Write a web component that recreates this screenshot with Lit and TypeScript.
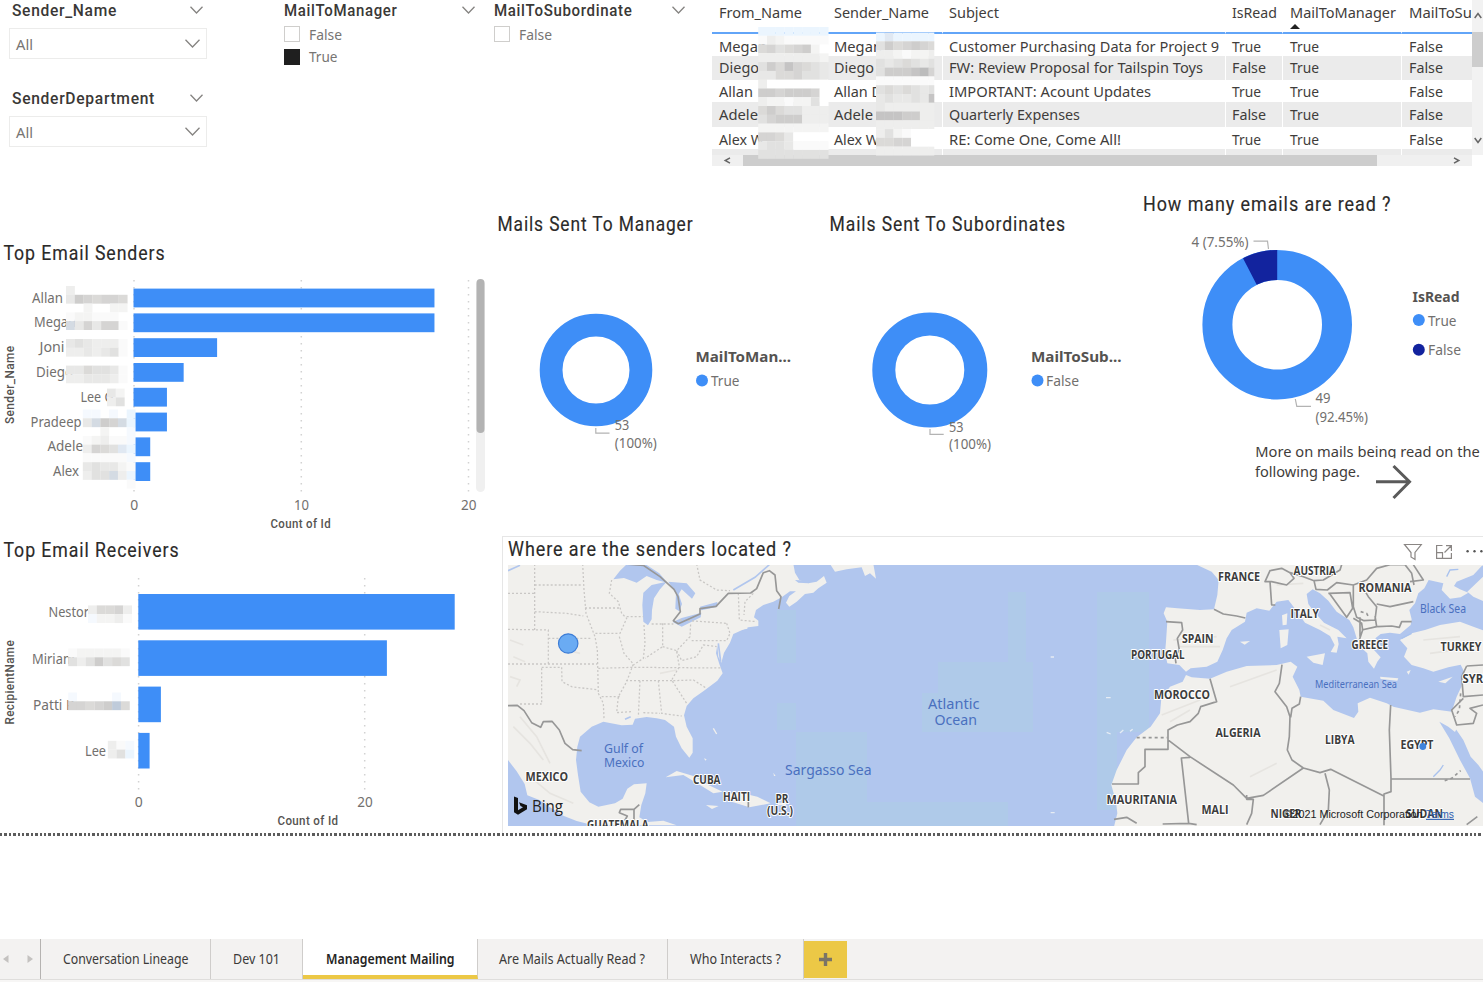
import { LitElement, html, svg, css } from "lit";
import { customElement } from "lit/decorators.js";

const BLUE = "#3e8ef7";
const NAVY = "#12239e";

/* Text set to a fixed measure inside any SVG. */
const tx = (s: string, x: number, y: number, w: number, cls: string) =>
  svg`<text class=${cls} x=${x} y=${y} textLength=${w} lengthAdjust="spacingAndGlyphs">${s}</text>`;

/* Inline label of a known width, placed by the surrounding flow. */
const label = (s: string, w: number, cls: string) =>
  html`<svg class="lbl" width=${w} height="20">${tx(s, 0, 15, w, cls)}</svg>`;

const chevron = (w: number, h: number) => html`
  <svg class="chev" width=${w} height=${h} viewBox="0 0 ${w} ${h}">
    <path d="M.5 .8L${w / 2} ${h - 1}L${w - 0.5} .8" fill="none" stroke="#858381" stroke-width="1.3" />
  </svg>`;

const TONES: Record<string, string> = {
  "0": "#ffffff", "1": "#fafafa", "2": "#f4f4f3", "3": "#eeeeed", "4": "#e8e8e7", "5": "#e1e1e0",
  "6": "#dbdad8", "7": "#d5d4d3", "8": "#cecdcc", "9": "#c5c4c4", A: "#bcbcbc",
  b: "#ebf5fe", p: "#f5f9fe", s: "#d4dbe3", S: "#bfcbda", c: "#e0e8f2",
};
const CELL = 8.78;
/* Redaction mosaic: one character per cell, "." leaves the cell open. */
const mosaic = (x: number, y: number, rows: string[], maxW = 999) =>
  rows.flatMap((r, j) =>
    [...r].map((c, i) =>
      c === "."
        ? null
        : svg`<rect x=${x + i * CELL} y=${y + j * CELL} width=${Math.min(CELL + 0.1, maxW - i * CELL)} height=${CELL + 0.1} fill=${TONES[c]} />`
    )
  );

const shared = css`
  :host { display: block; font-family: "Noto Sans", "Open Sans", sans-serif; color: #252423; }
  * { box-sizing: border-box; }
  svg { display: block; overflow: visible; flex: none; }
  .title { font: 400 19.5px Roboto, sans-serif; letter-spacing: 1px; fill: #2b2a29; stroke: #2b2a29; stroke-width: 0.15px; }
  .head { font: 500 16px Roboto, sans-serif; letter-spacing: 0.7px; fill: #3a3836; }
  .axis { font: 500 12.5px Roboto, sans-serif; letter-spacing: 0.4px; fill: #555351; }
  .tick { font: 13.5px "Noto Sans", sans-serif; fill: #72706e; }
  .cell { font: 14px "Noto Sans", sans-serif; fill: #3f3d3b; }
  .soft { font: 14.2px "Noto Sans", sans-serif; fill: #777573; }
  .strong { font: 700 13.5px "Noto Sans", sans-serif; fill: #555351; }
`;

@customElement("slicer-dropdown")
class SlicerDropdown extends LitElement {
  static properties = { name: {}, w: { type: Number } };
  name = "";
  w = 100;
  static styles = [shared, css`
    .top { display: flex; align-items: center; justify-content: space-between; height: 20px; padding: 0 3px 0 3px; width: 197px; }
    .top .chev { margin-top: -2px; }
    .box { margin: 7px 0 0 0; width: 198px; height: 31px; border: 1.5px solid #ececeb; display: flex; align-items: center; justify-content: space-between; padding: 3px 6px 0 6px; }
    .box .chev { margin-top: -3px; }
  `];
  render() {
    return html`
      <div class="top">${label(this.name, this.w, "head")}${chevron(13, 8)}</div>
      <div class="box">${label("All", 17, "soft")}${chevron(15, 9)}</div>`;
  }
}

@customElement("slicer-list")
class SlicerList extends LitElement {
  static properties = { name: {}, w: { type: Number }, items: { attribute: false } };
  name = "";
  w = 100;
  items: [string, number, boolean][] = [];
  static styles = [shared, css`
    .top { display: flex; align-items: center; justify-content: space-between; height: 20px; width: 191px; margin-bottom: 2px; }
    .top .chev { margin-top: -2px; }
    .item { display: flex; align-items: center; height: 22.5px; gap: 9px; }
    .check { width: 16px; height: 16px; border: 1.3px solid #cfcecc; background: #fff; }
    .on { background: #1f1f1f; border-color: #1f1f1f; }
    .item svg { margin-top: 1px; }
  `];
  render() {
    return html`
      <div class="top">${label(this.name, this.w, "head")}${chevron(13, 8)}</div>
      ${this.items.map(([t, w, on]) => html`
        <div class="item"><span class="check ${on ? "on" : ""}"></span>${label(t, w, "soft")}</div>`)}`;
  }
}

type Cell = [string, number];
const HEADERS: Cell[] = [["From_Name", 83], ["Sender_Name", 95], ["Subject", 50], ["IsRead", 45], ["MailToManager", 106], ["MailToSubordinate", 131]];
const T: Cell = ["True", 29];
const F: Cell = ["False", 34];
const ROWS: Cell[][] = [
  [["Megan", 48], ["Megan", 48], ["Customer Purchasing Data for Project 9", 270], T, T, F],
  [["Diego", 40], ["Diego", 40], ["FW: Review Proposal for Tailspin Toys", 254], F, T, F],
  [["Allan", 34], ["Allan D", 48], ["IMPORTANT: Acount Updates", 202], T, T, F],
  [["Adele", 39], ["Adele", 39], ["Quarterly Expenses", 131], F, T, F],
  [["Alex W", 45], ["Alex W", 45], ["RE: Come One, Come All!", 172], T, T, F],
];

@customElement("mail-table")
class MailTable extends LitElement {
  static styles = [shared, css`
    .wrap { position: relative; display: grid; grid-template-columns: 760px 11px; grid-template-rows: 155px 11px; width: 771px; overflow: hidden; }
    .grid { overflow: hidden; height: 155px; }
    .row { display: grid; grid-template-columns: 115.5px 115px 283px 57.5px 119px 200px; height: 22.5px; }
    .row > div { padding: 1px 0 0 6.5px; display: flex; align-items: center; border-right: 1px solid #fff; }
    .row.hdr { height: 34px; }
    .row.hdr > div { border-bottom: 2px solid #62a5f8; align-items: flex-start; padding-top: 3px; flex-direction: column; }
    .tri { width: 0; border: 5px solid transparent; border-top: 0; border-bottom: 5px solid #222; margin-top: 1px; }
    .row.r0 { height: 21.5px; }
    .row.r0 > div { padding-top: 3px; }
    .row.odd { height: 24.3px; background: #ebebeb; }
    .row.r4 > div { padding-top: 3px; }
    .row.rest { background: #ebebeb; height: 8px; }
    .vbar { background: #f2f2f2; display: flex; flex-direction: column; align-items: center; }
    .vbar .thumb { width: 11px; height: 35px; background: #cdcdcd; }
    .up { height: 32px; padding-top: 12px; }
    .down { margin-top: auto; padding-bottom: 11px; }
    .hbar { background: #f0f0f0; display: flex; align-items: center; width: 760px; }
    .hbar .thumb { width: 634px; height: 11px; background: #cdcdcd; margin-left: 13px; }
    .hbar .l { margin-left: 12px; }
    .hbar .r { margin-left: auto; margin-right: 12px; }
    .veil { position: absolute; left: 0; top: 0; }
  `];
  render() {
    const arrow = (d: string, w: number, h: number, c: string) =>
      html`<div class=${c}><svg width=${w} height=${h} viewBox="0 0 ${w} ${h}"><path d=${d} fill="none" stroke="#666" stroke-width="1.5" /></svg></div>`;
    return html`
      <div class="wrap">
        <div class="grid">
          <div class="row hdr">${HEADERS.map(([t, w], i) => html`<div>${label(t, w, "cell")}${i === 4 ? html`<span class="tri"></span>` : null}</div>`)}</div>
          ${ROWS.map((r, i) => html`<div class="row ${i % 2 ? "odd" : ""} r${i}">${r.map(([t, w]) => html`<div>${label(t, w, "cell")}</div>`)}</div>`)}
          <div class="row rest">${HEADERS.map(() => html`<div></div>`)}</div>
        </div>
        <div class="vbar">
          ${arrow("M.7 6L4 1.5L7.3 6", 8, 7, "up")}
          <div class="thumb"></div>
          ${arrow("M.7 1L4 5.5L7.3 1", 8, 7, "down")}
        </div>
        <div class="hbar">
          ${arrow("M6 .8L1.2 3.5L6 6.2", 6, 7, "l")}
          <div class="thumb"></div>
          ${arrow("M0 .8L4.8 3.5L0 6.2", 6, 7, "r")}
        </div>
        <svg class="veil" width="771" height="166" viewBox="712 0 771 166">
          ${mosaic(758.2, 27, ["bbbbbbbb", "13211111", "67567820", "33333332", "58697654", "44667554", "30000000", "88788870", "32212250", "68655333", "57888333", "22222222", "77640000", "45541111", "55555555"])}
          ${mosaic(876, 32.5, ["bcbbbbb", "5867876", "3321223", "5456545", "58889A7", "1111111", "5656545", "4544549", "4333333", "9998833", "3333333", "3521000", "6677000", "3333333"], 58.3)}
        </svg>
      </div>`;
  }
}

@customElement("bar-senders")
class BarSenders extends LitElement {
  static styles = shared;
  bars: [string, number, number, number][] = [
    ["Allan", 32, 31, 18], ["Megan", 34, 42, 18], ["Joni", 39.5, 25, 5], ["Diego", 36, 37, 3],
    ["Lee G", 80.5, 33, 2], ["Pradeep", 30.5, 51, 2], ["Adele", 47.5, 35.5, 1], ["Alex", 53, 26, 1],
  ];
  render() {
    return html`<svg width="500" height="300" viewBox="0 236 500 300">
      ${tx("Top Email Senders", 3.5, 260, 162, "title")}
      ${[134, 301.3, 468.5].map((x) => svg`<line x1=${x} x2=${x} y1="280" y2="493" stroke="#d2d2d2" stroke-dasharray="1.6 5.4" stroke-width="1.5" />`)}
      ${this.bars.map(([n, x, w, v], i) => svg`
        ${tx(n, x, 302.6 + i * 24.8, w, "tick")}
        <rect x="133.5" y=${288.6 + i * 24.8} width=${v * 16.72} height="18.8" fill=${BLUE} />`)}
      ${mosaic(66, 286, ["3......", "4876776", "..2..22", "1221110", "s474771"])}
      ${mosaic(66, 339, ["4543331", "3343451"])}
      ${mosaic(66, 365.6, ["4465541", "3344431"])}
      ${mosaic(107, 388.6, ["42", "35"])}
      ${mosaic(82.8, 409.5, ["pp.p.b", "4s87sb", "..2..p", "12311p", "3765cb", "11111p", "454421", "355s3b", ".....1"])}
      <rect x="476" y="280" width="9" height="212" rx="4.5" fill="#f0f0f0" />
      <rect x="476.5" y="279" width="8" height="154" rx="4" fill="#b3b3b3" />
      ${tx("0", 130.3, 509.5, 8, "tick")}${tx("10", 294, 509.5, 15, "tick")}${tx("20", 461, 509.5, 15.5, "tick")}
      ${tx("Count of Id", 270.5, 528, 60.5, "axis")}
      <g transform="rotate(-90 13.5 424)">${tx("Sender_Name", 13.5, 424, 78.5, "axis")}</g>
    </svg>`;
  }
}

@customElement("bar-receivers")
class BarReceivers extends LitElement {
  static styles = shared;
  bars: [string, number, number, number][] = [
    ["Nestor", 48.5, 40.5, 28], ["Miriam", 32, 43, 22], ["Patti R", 33, 41.5, 2], ["Lee", 85, 21, 1],
  ];
  render() {
    return html`<svg width="500" height="297" viewBox="0 536 500 297">
      ${tx("Top Email Receivers", 3.5, 557, 176, "title")}
      ${[138.6, 364.7].map((x) => svg`<line x1=${x} x2=${x} y1="578" y2="790" stroke="#d2d2d2" stroke-dasharray="1.6 5.4" stroke-width="1.5" />`)}
      ${this.bars.map(([n, x, w, v], i) => svg`
        ${tx(n, x, 617.3 + i * 46.3, w, "tick")}
        <rect x="138.3" y=${594 + i * 46.3} width=${v * 11.3} height="35.6" fill=${BLUE} />`)}
      ${mosaic(88, 605.4, ["36673", "p2231"])}
      ${mosaic(68.2, 648.5, ["1222221", "5358565"])}
      ${mosaic(68.2, 692.5, ["p....p.", "77678S6"])}
      ${mosaic(107.8, 740.8, ["31p", "35b"])}
      ${tx("0", 134.8, 806.5, 8, "tick")}${tx("20", 357.3, 806.5, 15.5, "tick")}
      ${tx("Count of Id", 277.5, 825, 61, "axis")}
      <g transform="rotate(-90 13.5 724.5)">${tx("RecipientName", 13.5, 724.5, 84.5, "axis")}</g>
    </svg>`;
  }
}

const ring = (cx: number, cy: number, ro: number, ri: number) =>
  svg`<circle cx=${cx} cy=${cy} r=${(ro + ri) / 2} fill="none" stroke=${BLUE} stroke-width=${ro - ri} />`;
const slice = (cx: number, cy: number, ro: number, ri: number, deg: number) => {
  const a = (deg * Math.PI) / 180;
  const s = Math.sin(a), c = Math.cos(a);
  return svg`<path fill=${NAVY} d="M${cx} ${cy - ro}A${ro} ${ro} 0 0 0 ${cx - ro * s} ${cy - ro * c}L${cx - ri * s} ${cy - ri * c}A${ri} ${ri} 0 0 1 ${cx} ${cy - ri}Z" />`;
};
const lead = (d: string) => svg`<path d=${d} fill="none" stroke="#b3b3b3" stroke-width="1.2" />`;

@customElement("donut-row")
class DonutRow extends LitElement {
  static styles = [shared, css`.row { display: flex; }`];
  render() {
    return html`<div class="row">
      <svg width="328" height="346" viewBox="497 190 328 346">
        ${tx("Mails Sent To Manager", 497.5, 230.5, 196, "title")}
        ${ring(596, 370, 56.3, 33.5)}
        ${lead("M595.8 428V433.2H609.5")}
        ${tx("53", 614.8, 429.5, 14.5, "tick")}${tx("(100%)", 614.8, 448, 42, "tick")}
        ${tx("MailToMan...", 695.5, 362, 95.5, "strong")}
        <circle cx="702" cy="380.6" r="6" fill=${BLUE} />${tx("True", 711, 386, 28.5, "tick")}
      </svg>
      <svg width="315" height="346" viewBox="825 190 315 346">
        ${tx("Mails Sent To Subordinates", 829.5, 230.5, 236.5, "title")}
        ${ring(929.8, 370, 57.5, 34.5)}
        ${lead("M930 429V434.4H943.7")}
        ${tx("53", 949, 431.5, 14.5, "tick")}${tx("(100%)", 949, 449, 42, "tick")}
        ${tx("MailToSub...", 1031, 362, 90.5, "strong")}
        <circle cx="1037.5" cy="380.6" r="6" fill=${BLUE} />${tx("False", 1046, 386, 33, "tick")}
      </svg>
      <svg width="343" height="346" viewBox="1140 190 343 346">
        ${tx("How many emails are read ?", 1143, 210.5, 248.5, "title")}
        ${ring(1277.2, 324.7, 74.8, 44.8)}
        ${slice(1277.2, 324.7, 74.8, 44.8, 27.2)}
        ${lead("M1253.5 241.2H1267.5L1268.5 249")}${lead("M1295.3 399L1296.8 406.4H1311")}
        ${tx("4 (7.55%)", 1191.5, 246.8, 57, "tick")}
        ${tx("49", 1315.5, 403, 15, "tick")}${tx("(92.45%)", 1315.5, 421.8, 52.5, "tick")}
        ${tx("IsRead", 1412.5, 301.5, 47, "strong")}
        <circle cx="1418.8" cy="320" r="6" fill=${BLUE} />${tx("True", 1428, 325.6, 28.5, "tick")}
        <circle cx="1418.8" cy="349.7" r="6" fill=${NAVY} />${tx("False", 1428, 354.6, 33, "tick")}
        ${tx("More on mails being read on the", 1255.3, 457, 224.5, "cell")}
        ${tx("following page.", 1255, 476.7, 105, "cell")}
        <rect x="1374" y="458.3" width="38" height="8" fill="#fff" />
        <path d="M1376 481.7H1409M1393.5 466L1409.5 481.7L1393.5 498" fill="none" stroke="#5a5a5a" stroke-width="3" />
      </svg>
    </div>`;
  }
}

/* Coastlines and borders; each side of the ocean has its own 1/3-pixel grid. */
const AMERICA = "M24 102H880L885 128L898 150L925 160L950 155L972 138L980 158L955 175L940 188L915 192L890 215L868 230L858 218L868 198L888 184L870 184L845 202L820 215L790 225L768 240L762 262L775 272V288L745 292L700 312L690 338L672 368L664 398L655 380L652 345L648 370L658 402L668 430L652 452L612 482L580 505L560 528L552 556L560 590L578 625V668L568 683L545 655L528 620L522 590L495 570L470 565L440 561L405 566L398 584L365 586L310 575L275 590L240 620L232 650L228 690L234 735L242 785L268 817L295 830L345 820L368 806L382 776L402 763L440 760L436 790L424 825L418 862L442 876L490 872L530 886H280L230 873L190 857L150 832L118 810L82 796L74 762L50 724L24 690Z";
const LAKES = ["M340 148L360 122L378 105L440 105L478 130L502 158L470 150L440 138L410 158L372 144Z", "M430 188L455 165L500 155L480 178L462 205L456 240L455 268L444 286L430 275L427 225Z", "M505 155L560 160L586 190L576 206L545 178L536 192L546 222L538 244L526 236L528 190Z", "M518 276L545 264L604 248L602 262L545 290Z", "M600 230L652 216L652 230L604 241Z"];
const STATES = "M104 102V300M24 190H104M104 165H245M104 245L200 250L250 258M248 102L252 180L258 250L285 320L292 360L295 490M24 298L145 300V402M145 325H275M24 402H292M125 415V522M125 412H185L186 455L215 470L295 480M60 522H125M255 234H362M335 150L328 190L355 215L365 250L380 265L360 310H280M380 260H430M358 320L372 370L400 402L380 455L355 500L350 548L395 545M295 415L400 412L665 414M378 452H520M295 490L310 520L312 565M305 500H360M432 285L435 340L430 385L400 405M488 280V350L435 385M488 350L530 362L570 320L572 280M455 282H520M540 270L680 280M575 332H680L690 310M530 362L545 392L590 380L610 345L650 350M530 365L538 410L515 450L560 520M420 452L415 560M475 452L485 550L545 558M430 548L480 550M520 452L580 450L620 475M590 102L600 150L650 180L690 182M715 190L718 270L770 275M760 190L735 215L732 255M680 280L690 310";
const BORDER_A = ["M375 102L430 106L480 140L522 178L534 200L541 245L520 272L535 281L600 252L600 236L648 229L685 190L752 189L770 176L790 128L808 122L825 135L830 182L843 200L836 237", "M24 527L52 526L72 542L95 578L122 592L130 575L156 574L178 600L195 640L218 659L245 662", "M418 824L402 838L362 838L358 848L382 858L374 872M402 838V872"];
const EUROPE = "M315 102L365 125L386 150L382 195L372 238L330 240L262 235L228 232L221 250L232 275L228 335L225 368L232 400L268 405L288 425L302 415L350 410L382 395L398 360L410 325L425 300L465 275L470 248L500 235L538 242L560 215L595 210L618 240L645 278L690 300L720 318L734 345L722 366L740 368L746 342L742 320L770 325L745 300L702 278L672 245L655 222L650 192L668 178L690 190L715 212L740 245L778 270L790 292L800 325L808 348L832 370L835 395L852 416L862 395L872 382L852 360L875 352L856 325L872 312L900 308L930 312L962 285L965 268L958 240L975 220L985 190L1003 175L1016 150L1060 160L1055 180L1080 206L1112 202L1135 188L1110 178L1092 168L1100 155L1150 135L1175 108L1190 102ZM930 330L965 310L1005 300L1050 285L1110 275L1150 290L1190 305V740L1165 705L1142 680L1120 630L1098 598L1085 545L1100 500L1114 470L1120 420L1112 404L1075 412L1030 425L1000 415L965 405L942 380L952 355ZM1132 185L1190 130V218L1150 200Z";
const AFRICA = "M288 435L305 442L360 446L410 425L470 408L560 405L602 395L622 410L608 440L628 480L632 500L700 512L730 540L792 564L805 545L803 520L840 503L890 520L910 530L990 548L1030 538L1086 545L1108 580L1095 606L1075 590L1048 575L1078 625L1110 690L1140 745L1155 800L1190 828V890H72L82 850L78 815L64 765L80 720L110 660L140 622L182 590L210 550L214 505L240 470L278 455Z";
const ISLES = ["M650 380L705 370L698 405L670 398Z", "M568 300L596 298L592 345L572 355Z", "M576 256L592 250L590 284L578 286Z", "M870 440L925 445L922 452L872 447Z", "M1045 455L1088 440L1066 460Z", "M450 335L480 333L464 344Z", "M950 425L962 420L956 434Z"];
const BORDER_E = ["M372 238L400 252L440 258L466 264M228 275L275 278L278 300L262 325L268 360L255 380L258 400M360 446L380 515L332 530L325 550L300 575L262 585L234 600V658H165V710L145 728V762H66M232 628L300 680L430 765L470 805L520 796L640 714L690 728L722 718L880 797M576 404L568 460L555 485L590 530L600 560L598 620L592 660L606 690L640 714M632 500L628 522L606 535L602 562M902 525L898 600L903 745V785L882 792V886M903 747H1140M705 730L718 780L715 840L690 884M470 795V808H490L485 850L470 884M300 682L274 684L296 880L218 882M296 880L320 884M72 868L110 862L140 880", "M525 155L540 122L575 115L600 128L612 145L590 165L545 155ZM540 155L545 225L556 225M600 128L640 140L672 152L700 150L750 120L755 104M672 152L678 178L712 180L740 158L790 165L830 150L860 115L900 104L945 104L965 130L972 165M715 190L780 188L788 235L770 262L718 190M790 165L790 230L800 262L822 272L855 270L860 230L835 200L820 175M860 222L900 230L970 215M855 258L860 290L815 300M810 262V320M862 290L905 288L928 292L935 275L965 275M790 265L815 280L818 300L808 330M970 104L1000 150L960 155M1130 408L1179 405M1130 408L1115 440L1120 500L1179 495M1120 505L1085 540L1100 585L1150 580L1160 550L1140 535L1179 525M1162 860L1130 884"];
const RIDGES = "M30 440L60 450L50 470M30 330L70 345M40 590L90 640L130 690M90 740L150 790L220 820M480 430L530 420M60 560L110 620L150 700M240 370L200 360M40 380L75 395";

@customElement("sender-map")
class SenderMap extends LitElement {
  static styles = [shared, css`
    :host { height: 298px; }
    .card { border: 1px solid #e6e6e6; border-right: 0; border-bottom: 0; width: 981px; height: 297px; padding: 0 0 0 5px; }
    .bar { height: 27.5px; display: flex; justify-content: space-between; align-items: center; }
    .clip { overflow: hidden; width: 975px; height: 261px; }
    .land { fill: #f1f0ed; }
    .water { fill: #b1c6ee; }
    .shoal { fill: #afcae9; }
    .border { fill: none; stroke: #979797; stroke-width: 5; stroke-linejoin: round; }
    .state { fill: none; stroke: #c9c7c5; stroke-width: 3.8; stroke-dasharray: 6 6; }
    .ridge { fill: none; stroke: #e6e4e0; stroke-width: 5; }
    .country { font: 700 11.5px "Open Sans", "Noto Sans", sans-serif; fill: #3c3c3c; stroke: #fff; stroke-width: 2px; paint-order: stroke; stroke-linejoin: round; }
    .sea { font: 13.5px "Noto Sans", sans-serif; fill: #4a70bf; }
    .sea2 { font: 12px "Noto Sans", sans-serif; fill: #4a70bf; }
    .sea3 { font: 10.5px "Noto Sans", sans-serif; fill: #4a70bf; }
    .bing { font: 16.5px "Open Sans", sans-serif; fill: #222; }
    .credit { font: 11px "Liberation Sans", sans-serif; fill: #222; }
    .terms { font: 11px "Liberation Sans", sans-serif; fill: #2a5db0; text-decoration: underline; }
  `];
  render() {
    const names: [string, number, number, number][] = [
      ["MEXICO", 525.5, 781, 42.5], ["CUBA", 693, 784.3, 27.5], ["HAITI", 723, 801, 27], ["PR", 775.5, 802.5, 13], ["(U.S.)", 767, 815, 26], ["GUATEMALA", 587, 829, 61.5],
      ["FRANCE", 1218, 580.5, 42], ["AUSTRIA", 1293.5, 575, 42.5], ["ROMANIA", 1358.5, 592.3, 53], ["ITALY", 1290.5, 618, 28.5], ["GREECE", 1351.5, 649.3, 36.5], ["TURKEY", 1440.5, 650.5, 41], ["SPAIN", 1182, 643.3, 31.5], ["PORTUGAL", 1131, 658.5, 53.5], ["MOROCCO", 1154, 699, 56], ["ALGERIA", 1215.5, 736.5, 45], ["LIBYA", 1325, 744, 29.5], ["EGYPT", 1400.5, 748.5, 33], ["SYRIA", 1462.5, 683, 32], ["MAURITANIA", 1106.5, 804, 70.5], ["MALI", 1201.5, 813.5, 27], ["NIGER", 1270.5, 818, 31], ["SUDAN", 1406, 818, 37],
    ];
    const shoals = [[1008, 592, 18, 70], [938, 662, 95, 32], [922, 693, 111, 39], [1097, 592, 52, 140], [1097, 730, 20, 80], [796, 732, 71, 94], [830, 802, 178, 24], [777, 610, 19, 53], [777, 703, 19, 27]];
    return html`<div class="card">
      <div class="bar">
        <svg width="300" height="26" viewBox="508 537 300 26">${tx("Where are the senders located ?", 508, 554.7, 284, "title")}</svg>
        <svg width="84" height="26" viewBox="1399 537 84 26" fill="none" stroke="#8a8684" stroke-width="1.2">
          <path d="M1404.5 543.5H1421.3L1415 551.5V558.5L1411 556V551.5Z" />
          <path d="M1442.5 544.5H1436.6V557.4H1451.4V552M1436.6 551.7H1442.5V557.6M1444.5 551.5L1451 545M1446 544.6H1451.4V550" />
          <g fill="#555" stroke="none"><circle cx="1467.6" cy="550.2" r="1.2" /><circle cx="1474.5" cy="550.2" r="1.2" /><circle cx="1481.4" cy="550.2" r="1.2" /></g>
        </svg>
      </div>
      <div class="clip">
        <svg width="975" height="261" viewBox="508 565 975 261">
          <rect class="water" x="508" y="565" width="975" height="261" />
          ${shoals.map(([x, y, w, h]) => svg`<rect class="shoal" x=${x} y=${y} width=${w} height=${h} />`)}
          <g transform="translate(500 530) scale(.33333)">
            <path class="land" d=${AMERICA} />
            <path class="ridge" d=${RIDGES} />
            <path class="water" d="M885 150L930 152L925 160L895 158Z" />
            ${LAKES.map((d) => svg`<path class="water" d=${d} />`)}
            <path d="M700 180L765 142L808 104M24 122L60 106M375 568L392 560M655 340L662 395" fill="none" stroke="#b1c6ee" stroke-width="5" />
            <path class="state" d=${STATES} />
            ${BORDER_A.map((d) => svg`<path class="border" d=${d} />`)}
            <path class="land" d="M497 742L530 723L580 738L625 765L668 785L640 790L600 765L550 735ZM670 793L722 788L772 800L812 820L748 832L690 814ZM618 825L656 828L636 837ZM832 818H858V826H834ZM990 102L1120 102L1128 146L1110 130L1095 138L1085 112L1040 118L1005 125ZM612 685L620 688L616 692ZM820 728L827 738L822 738Z" />
            <path class="border" d="M745 795V832" stroke-width="3" />
            <path d="M700 302L742 294M640 595L650 612" stroke="#f1f0ed" stroke-width="4" />
          </g>
          <g transform="translate(1090 530) scale(.33333)">
            <path class="land" d=${EUROPE} />
            <path class="land" d=${AFRICA} />
            ${ISLES.map((d) => svg`<path class="land" d=${d} />`)}
            <path class="ridge" d="M215 555L330 510M240 575L300 540M420 470L560 420M250 330L380 320M270 350L390 350M560 165L640 160M1000 330L1110 320M1020 370L1170 350M480 740L560 700M690 285L720 300" />
            <path d="M965 310L935 325M1070 140L1080 120L1105 118M1030 740L1050 720L1060 705" fill="none" stroke="#a9c2ee" stroke-width="4" />
            ${BORDER_E.map((d) => svg`<path class="border" d=${d} />`)}
            <path class="border" d="M140 623H232M1064 752L1085 745L1112 722M812 245L830 250L838 265M1112 490L1108 540L1095 560" stroke-dasharray="9 9" />
            <path d="M-118 381H-108M48 503H62M50 607L62 612M90 609L100 600M-118 848H-106M120 604L128 598" stroke="#e6ecf4" stroke-width="4" />
          </g>
          ${names.map(([t, x, y, w]) => tx(t, x, y, w, "country"))}
          ${tx("Gulf of", 604, 753, 39, "sea2")}${tx("Mexico", 604, 767, 40.5, "sea2")}
          ${tx("Sargasso Sea", 785, 775, 86.5, "sea")}
          ${tx("Atlantic", 928, 708.5, 51.5, "sea")}${tx("Ocean", 934.5, 724.5, 42.5, "sea")}
          ${tx("Black Sea", 1420, 613, 46, "sea2")}
          ${tx("Mediterranean Sea", 1315, 688, 82, "sea3")}
          <circle cx="568.2" cy="643.5" r="9.7" fill="#6aabf3" stroke="#3c7cd6" stroke-width="1.2" />
          <circle cx="1422.8" cy="746.5" r="3.4" fill="#3d83dc" />
          <path d="M514 796.5L518 798V810.3L523 807.3L520.5 806L519 802.3L527 805.2V809.2L518 814.8L514 812.3Z" fill="#111" />
          ${tx("Bing", 532, 811.8, 31, "bing")}
          ${tx("©2021 Microsoft Corporation", 1284.5, 817.8, 138, "credit")}
          ${tx("Terms", 1426, 817.8, 28, "terms")}
        </svg>
      </div>
    </div>`;
  }
}

@customElement("page-tabs")
class PageTabs extends LitElement {
  static styles = [shared, css`
    .bar { display: flex; height: 41px; background: #f3f2f1; border-bottom: 1px solid #dfdedc; }
    .nav { width: 41px; border-right: 1px solid #b5b3b1; display: flex; align-items: center; justify-content: space-between; padding: 0 7px 0 3px; }
    .tab { display: flex; align-items: center; justify-content: center; border-right: 1px solid #cfcdcb; height: 40px; }
    .tab svg { margin-top: -1px; }
    .on { background: #fff; border-bottom: 4px solid #ecc846; }
    .on svg { margin-top: 3px; }
    .add { width: 43px; height: 37px; margin-top: 2px; background: #ecc846; display: flex; align-items: center; justify-content: center; }
    .t { font: 13.5px "Noto Sans", sans-serif; fill: #3b3a39; }
    .ts { font: 600 13.5px "Noto Sans", sans-serif; fill: #252423; }
  `];
  render() {
    const tabs: [string, number, string][] = [
      ["Conversation Lineage", 125.5, "170"], ["Dev 101", 47, "92"], ["Management Mailing", 128.5, "174.5"],
      ["Are Mails Actually Read ?", 146, "190.5"], ["Who Interacts ?", 91, "136"],
    ];
    return html`<div class="bar">
      <div class="nav">
        <svg width="6" height="8"><path d="M5.5 0V8L0 4Z" fill="#c4c2c0" /></svg>
        <svg width="6" height="8"><path d="M.5 0V8L6 4Z" fill="#c4c2c0" /></svg>
      </div>
      ${tabs.map(([t, w, full], i) => html`<div class="tab ${i === 2 ? "on" : ""}" style="width:${full}px">${label(t, w, i === 2 ? "ts" : "t")}</div>`)}
      <div class="add"><svg width="13" height="13"><path d="M6.5 0V13M0 6.5H13" stroke="#7b7466" stroke-width="3.4" /></svg></div>
    </div>`;
  }
}

@customElement("app-root")
class AppRoot extends LitElement {
  static styles = [shared, css`
    :host { width: 1483px; height: 982px; overflow: hidden; background: #fff; }
    .page { display: flex; flex-direction: column; height: 982px; }
    .top { display: flex; height: 190px; }
    .col { width: 284px; padding: 1px 0 0 9px; display: flex; flex-direction: column; gap: 30px; }
    .list { width: 210px; padding-top: 1px; }
    .last { width: 218px; }
    .body { display: grid; grid-template-columns: 497px 986px; height: 643px; }
    .left { padding-top: 46px; }
    .map { padding-left: 5px; }
    .cut { height: 3px; background: repeating-linear-gradient(90deg, #5c5c5c 0 2.4px, #fff 2.4px 4.4px); }
    .foot { margin-top: auto; background: #f7f6f5; height: 43px; }
  `];
  render() {
    return html`<div class="page">
      <div class="top">
        <div class="col">
          <slicer-dropdown name="Sender_Name" .w=${105}></slicer-dropdown>
          <slicer-dropdown name="SenderDepartment" .w=${143}></slicer-dropdown>
        </div>
        <div class="list"><slicer-list name="MailToManager" .w=${113.5} .items=${[["False", 33, false], ["True", 28.5, true]]}></slicer-list></div>
        <div class="list last"><slicer-list name="MailToSubordinate" .w=${138.5} .items=${[["False", 33, false]]}></slicer-list></div>
        <mail-table></mail-table>
      </div>
      <div class="body">
        <div class="left"><bar-senders></bar-senders><bar-receivers></bar-receivers></div>
        <div class="right">
          <donut-row></donut-row>
          <div class="map"><sender-map></sender-map></div>
        </div>
      </div>
      <div class="cut"></div>
      <div class="foot"><page-tabs></page-tabs></div>
    </div>`;
  }
}
